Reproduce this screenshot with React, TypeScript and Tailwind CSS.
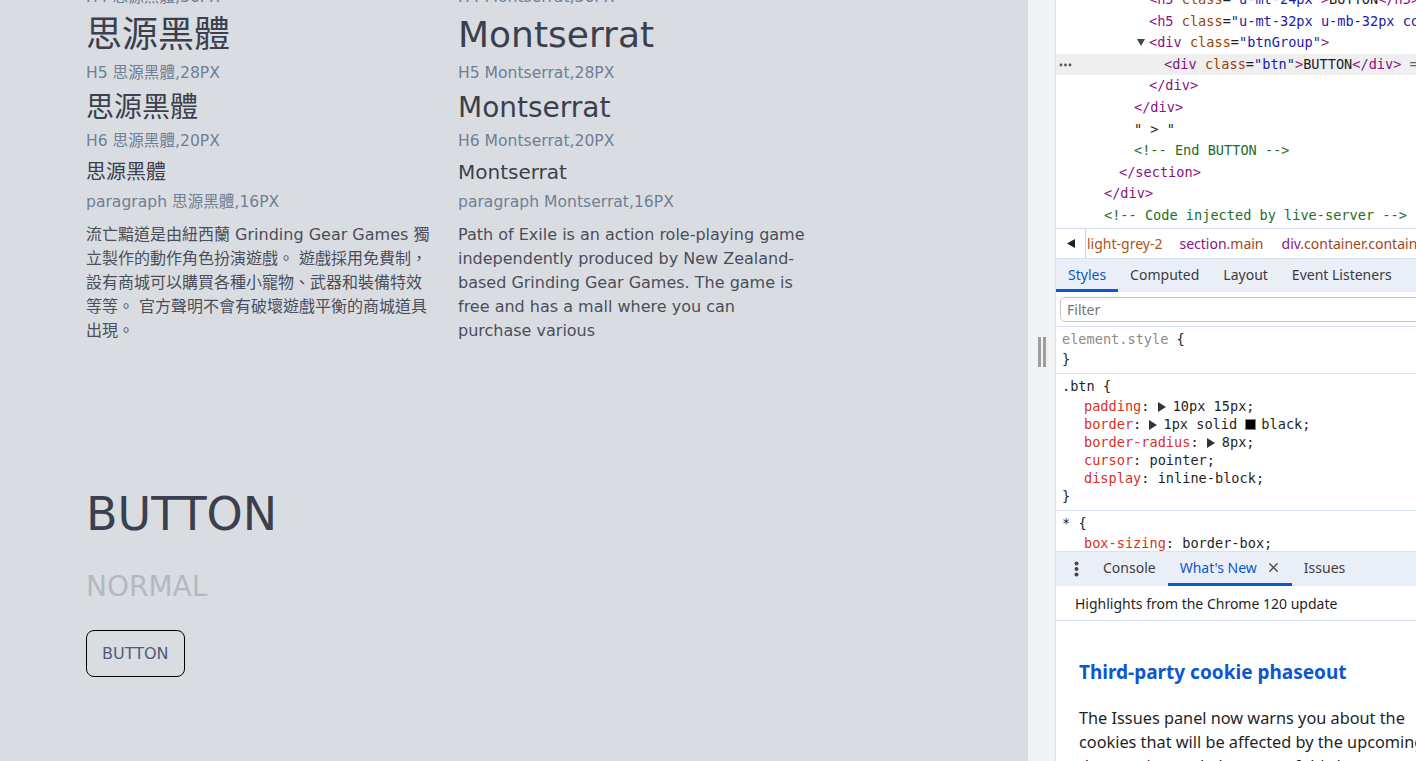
import React from 'react';
import { X } from 'lucide-react';

const pageFont = "font-['DejaVu_Sans','Noto_Sans_CJK_TC',sans-serif]";
const mono = "font-['DejaVu_Sans_Mono',monospace] text-[13.6px]";
const ui = "font-['Noto_Sans',sans-serif]";

function Label({ children, className = '' }: { children: React.ReactNode; className?: string }) {
  return <div className={`h-6 leading-6 text-[15.6px] text-[#6f7f96] whitespace-nowrap ${className}`}>{children}</div>;
}

function TypeColumn({ name, width, body }: { name: string; width: string; body: string }) {
  return (
    <div className={width}>
      <Label>H4 {name},36PX</Label>
      <h4 className="mt-2 text-[36px] leading-none text-[#3c3f4d] whitespace-nowrap">{name}</h4>
      <Label className="mt-2">H5 {name},28PX</Label>
      <h5 className="mt-[9px] text-[28px] leading-none text-[#3c3f4d] whitespace-nowrap">{name}</h5>
      <Label className="mt-[7px]">H6 {name},20PX</Label>
      <h6 className="mt-[9px] text-[20px] leading-none text-[#3c3f4d] whitespace-nowrap">{name}</h6>
      <Label className="mt-2">paragraph {name},16PX</Label>
      <p className="mt-[9px] text-[16px] leading-6 text-[#4b4e5a]">{body}</p>
    </div>
  );
}

const T = ({ children }: { children: React.ReactNode }) => <span className="text-[#881280]">{children}</span>;
const A = ({ children }: { children: React.ReactNode }) => <span className="text-[#994500]">{children}</span>;
const V = ({ children }: { children: React.ReactNode }) => <span className="text-[#1a1aa6]">"{children}"</span>;
const C = ({ children }: { children: React.ReactNode }) => <span className="text-[#236e25]">{children}</span>;

function Row({ pad, children, active = false }: { pad: string; children: React.ReactNode; active?: boolean }) {
  return (
    <div className={`relative h-[21.6px] leading-[21.6px] whitespace-nowrap text-[#1f1f1f] ${pad} ${active ? 'bg-[#efefef]' : ''}`}>
      {active && (
        <svg className="absolute left-[3px] top-[9px]" width="13" height="4" viewBox="0 0 13 4">
          <circle cx="2" cy="2" r="1.4" fill="#555" />
          <circle cx="6.5" cy="2" r="1.4" fill="#555" />
          <circle cx="11" cy="2" r="1.4" fill="#555" />
        </svg>
      )}
      {children}
    </div>
  );
}

const Arrow = ({ mr = 'mr-[7px]' }: { mr?: string }) => (
  <svg className={`inline-block align-[-1px] ${mr}`} width="8" height="10" viewBox="0 0 8 10">
    <polygon points="0,0 8,5 0,10" fill="#333" />
  </svg>
);

function Prop({ name, children }: { name: string; children: React.ReactNode }) {
  return (
    <div className="h-[18px] leading-[18px] pl-[28px] whitespace-nowrap text-[#1f1f1f]">
      <span className="text-[#d93025]">{name}</span>: {children}
    </div>
  );
}

function Tab({ label, active = false, close = false }: { label: string; active?: boolean; close?: boolean }) {
  return (
    <div
      className={`h-full shrink-0 flex items-center px-3 border-b-[3px] ${
        active ? 'border-[#0b57d0] text-[#0b57d0]' : 'border-transparent text-[#3c3c3c]'
      }`}
    >
      <span>{label}</span>
      {close && <X size={15} strokeWidth={2} className="ml-[9px] -mr-[1px] text-[#474747]" />}
    </div>
  );
}

function DevTools() {
  return (
    <div className="flex-1 min-w-0 h-full flex flex-col bg-white border-l border-[#d6e2f3] overflow-hidden">
      {/* elements tree */}
      <div className={`h-[228px] shrink-0 overflow-hidden ${mono}`}>
        <div className="-mt-[11px]">
          <Row pad="pl-[93px]">
            <T>&lt;h5</T> <A>class</A>=<V>u-mt-24px</V><T>&gt;</T>BUTTON<T>&lt;/h5&gt;</T>
          </Row>
          <Row pad="pl-[93px]">
            <T>&lt;h5</T> <A>class</A>=<V>u-mt-32px u-mb-32px color-light-grey-2</V><T>&gt;</T>NORMAL<T>&lt;/h5&gt;</T>
          </Row>
          <Row pad="pl-[81px]">
            <svg className="inline-block align-[0px] mr-[4px]" width="8" height="8" viewBox="0 0 8 8">
              <polygon points="0,0 8,0 4,7" fill="#444" />
            </svg>
            <T>&lt;div</T> <A>class</A>=<V>btnGroup</V><T>&gt;</T>
          </Row>
          <Row pad="pl-[108px]" active>
            <T>&lt;div</T> <A>class</A>=<V>btn</V><T>&gt;</T>BUTTON<T>&lt;/div&gt;</T> <span className="text-[#666]">== $0</span>
          </Row>
          <Row pad="pl-[93px]">
            <T>&lt;/div&gt;</T>
          </Row>
          <Row pad="pl-[78px]">
            <T>&lt;/div&gt;</T>
          </Row>
          <Row pad="pl-[78px]">" &gt; "</Row>
          <Row pad="pl-[78px]">
            <C>&lt;!-- End BUTTON --&gt;</C>
          </Row>
          <Row pad="pl-[63px]">
            <T>&lt;/section&gt;</T>
          </Row>
          <Row pad="pl-[48px]">
            <T>&lt;/div&gt;</T>
          </Row>
          <Row pad="pl-[48px]">
            <C>&lt;!-- Code injected by live-server --&gt;</C>
          </Row>
        </div>
      </div>

      {/* breadcrumbs */}
      <div className={`h-[30px] shrink-0 border-t border-[#d6e2f3] flex items-center whitespace-nowrap text-[14px] ${ui}`}>
        <div className="w-[30px] shrink-0 h-full flex items-center justify-center border-r border-[#d0d0d0]">
          <svg width="8" height="9" viewBox="0 0 8 9">
            <polygon points="8,0 8,9 0,4.5" fill="#1f1f1f" />
          </svg>
        </div>
        <span className="shrink-0 pl-[1px] pr-[17px] text-[#b0501a]">light-grey-2</span>
        <span className="shrink-0 pr-[18px]">
          <span className="text-[#881280]">section</span>
          <span className="text-[#a0461b]">.main</span>
        </span>
        <span className="shrink-0">
          <span className="text-[#881280]">div</span>
          <span className="text-[#a0461b]">.container.container-lg</span>
        </span>
      </div>

      {/* tabs */}
      <div className={`h-[34px] shrink-0 border-t border-[#d6e2f3] bg-[#eaeff7] flex text-[14px] whitespace-nowrap ${ui}`}>
        <Tab label="Styles" active />
        <Tab label="Computed" />
        <Tab label="Layout" />
        <Tab label="Event Listeners" />
      </div>

      {/* styles pane */}
      <div className="h-[259px] shrink-0 overflow-hidden">
        <div className="h-[35px] border-b border-[#d6e2f3] pt-[5px] pl-[4px]">
          <div className={`h-[25px] w-[400px] rounded-[5px] border border-[#c4c7c5] pl-[6px] flex items-center text-[14px] text-[#757575] ${ui}`}>
            Filter
          </div>
        </div>
        <div className={mono}>
          <div className="border-b border-[#d6e2f3] pt-[2px] pb-[5px]">
            <div className="h-[21px] leading-[21px] pl-[6px]">
              <span className="text-[#8b8b8b]">element.style</span> <span className="text-[#1f1f1f]">{'{'}</span>
            </div>
            <div className="h-[18px] leading-[18px] pl-[6px] text-[#1f1f1f]">{'}'}</div>
          </div>
          <div className="border-b border-[#d6e2f3] pt-[2px] pb-[5px]">
            <div className="h-[21px] leading-[21px] pl-[6px] text-[#1f1f1f]">.btn {'{'}</div>
            <Prop name="padding">
              <Arrow />
              10px 15px;
            </Prop>
            <Prop name="border">
              <Arrow mr="mr-[6px]" />
              1px solid <span className="inline-block w-[11px] h-[11px] bg-black border border-[#888] align-[-1px] mr-[5px]" />
              black;
            </Prop>
            <Prop name="border-radius">
              <Arrow />
              8px;
            </Prop>
            <Prop name="cursor">pointer;</Prop>
            <Prop name="display">inline-block;</Prop>
            <div className="h-[18px] leading-[18px] pl-[6px] text-[#1f1f1f]">{'}'}</div>
          </div>
          <div className="pt-[2px]">
            <div className="h-[21px] leading-[21px] pl-[6px] text-[#1f1f1f]">* {'{'}</div>
            <Prop name="box-sizing">border-box;</Prop>
          </div>
        </div>
      </div>

      {/* drawer */}
      <div className={`h-[35px] shrink-0 border-t border-[#d6e2f3] bg-[#eaeff7] flex text-[14px] whitespace-nowrap ${ui}`}>
        <div className="w-[35px] shrink-0 h-full flex items-center pl-[18px]">
          <svg width="5" height="16" viewBox="0 0 5 16">
            <circle cx="2.5" cy="2.5" r="2" fill="#474747" />
            <circle cx="2.5" cy="8" r="2" fill="#474747" />
            <circle cx="2.5" cy="13.5" r="2" fill="#474747" />
          </svg>
        </div>
        <Tab label="Console" />
        <Tab label="What's New" active close />
        <Tab label="Issues" />
      </div>
      <div className={`h-[35px] shrink-0 border-b border-[#d6e2f3] flex items-center pl-[19px] text-[14px] text-[#1f1f1f] whitespace-nowrap ${ui}`}>
        Highlights from the Chrome 120 update
      </div>
      <div className={`pl-[23px] pt-[37px] ${ui}`}>
        <h2 className="text-[19px] leading-[28px] font-bold text-[#0b57d0] whitespace-nowrap">Third-party cookie phaseout</h2>
        <p className="mt-[20px] w-[380px] text-[16.3px] leading-6 text-[#1f1f1f]">
          The Issues panel now warns you about the cookies that will be affected by the upcoming deprecation and phaseout of
          third-party cookies.
        </p>
      </div>
    </div>
  );
}

export default function App() {
  return (
    <div className="w-[1416px] h-[761px] flex overflow-hidden">
      <div className={`w-[1028px] shrink-0 h-full bg-[#d9dde1] overflow-hidden pl-[86px] ${pageFont}`}>
        <div className="-mt-[15px] flex gap-[28px]">
          <TypeColumn
            name="思源黑體"
            width="w-[344px]"
            body="流亡黯道是由紐西蘭 Grinding Gear Games 獨立製作的動作角色扮演遊戲。 遊戲採用免費制，設有商城可以購買各種小寵物、武器和裝備特效等等。 官方聲明不會有破壞遊戲平衡的商城道具出現。"
          />
          <TypeColumn
            name="Montserrat"
            width="w-[352px]"
            body="Path of Exile is an action role-playing game independently produced by New Zealand-based Grinding Gear Games. The game is free and has a mall where you can purchase various"
          />
        </div>
        <h2 className="mt-[148px] text-[46px] leading-none text-[#3c3f4d]">BUTTON</h2>
        <h5 className="mt-[36px] text-[28px] leading-none text-[#b2b9c3]">NORMAL</h5>
        <div className="mt-[29px] flex">
          <div className="px-[15px] py-[10px] border border-black rounded-[8px] text-[16px] leading-[25px] text-[#4e5d78] cursor-pointer">
            BUTTON
          </div>
        </div>
      </div>
      <div className="w-[27px] shrink-0 h-full bg-[#f1f2f4] flex justify-center gap-[2px] pt-[337px]">
        <div className="w-[3px] h-[30px] bg-[#9e9e9e]" />
        <div className="w-[3px] h-[30px] bg-[#9e9e9e]" />
      </div>
      <DevTools />
    </div>
  );
}
